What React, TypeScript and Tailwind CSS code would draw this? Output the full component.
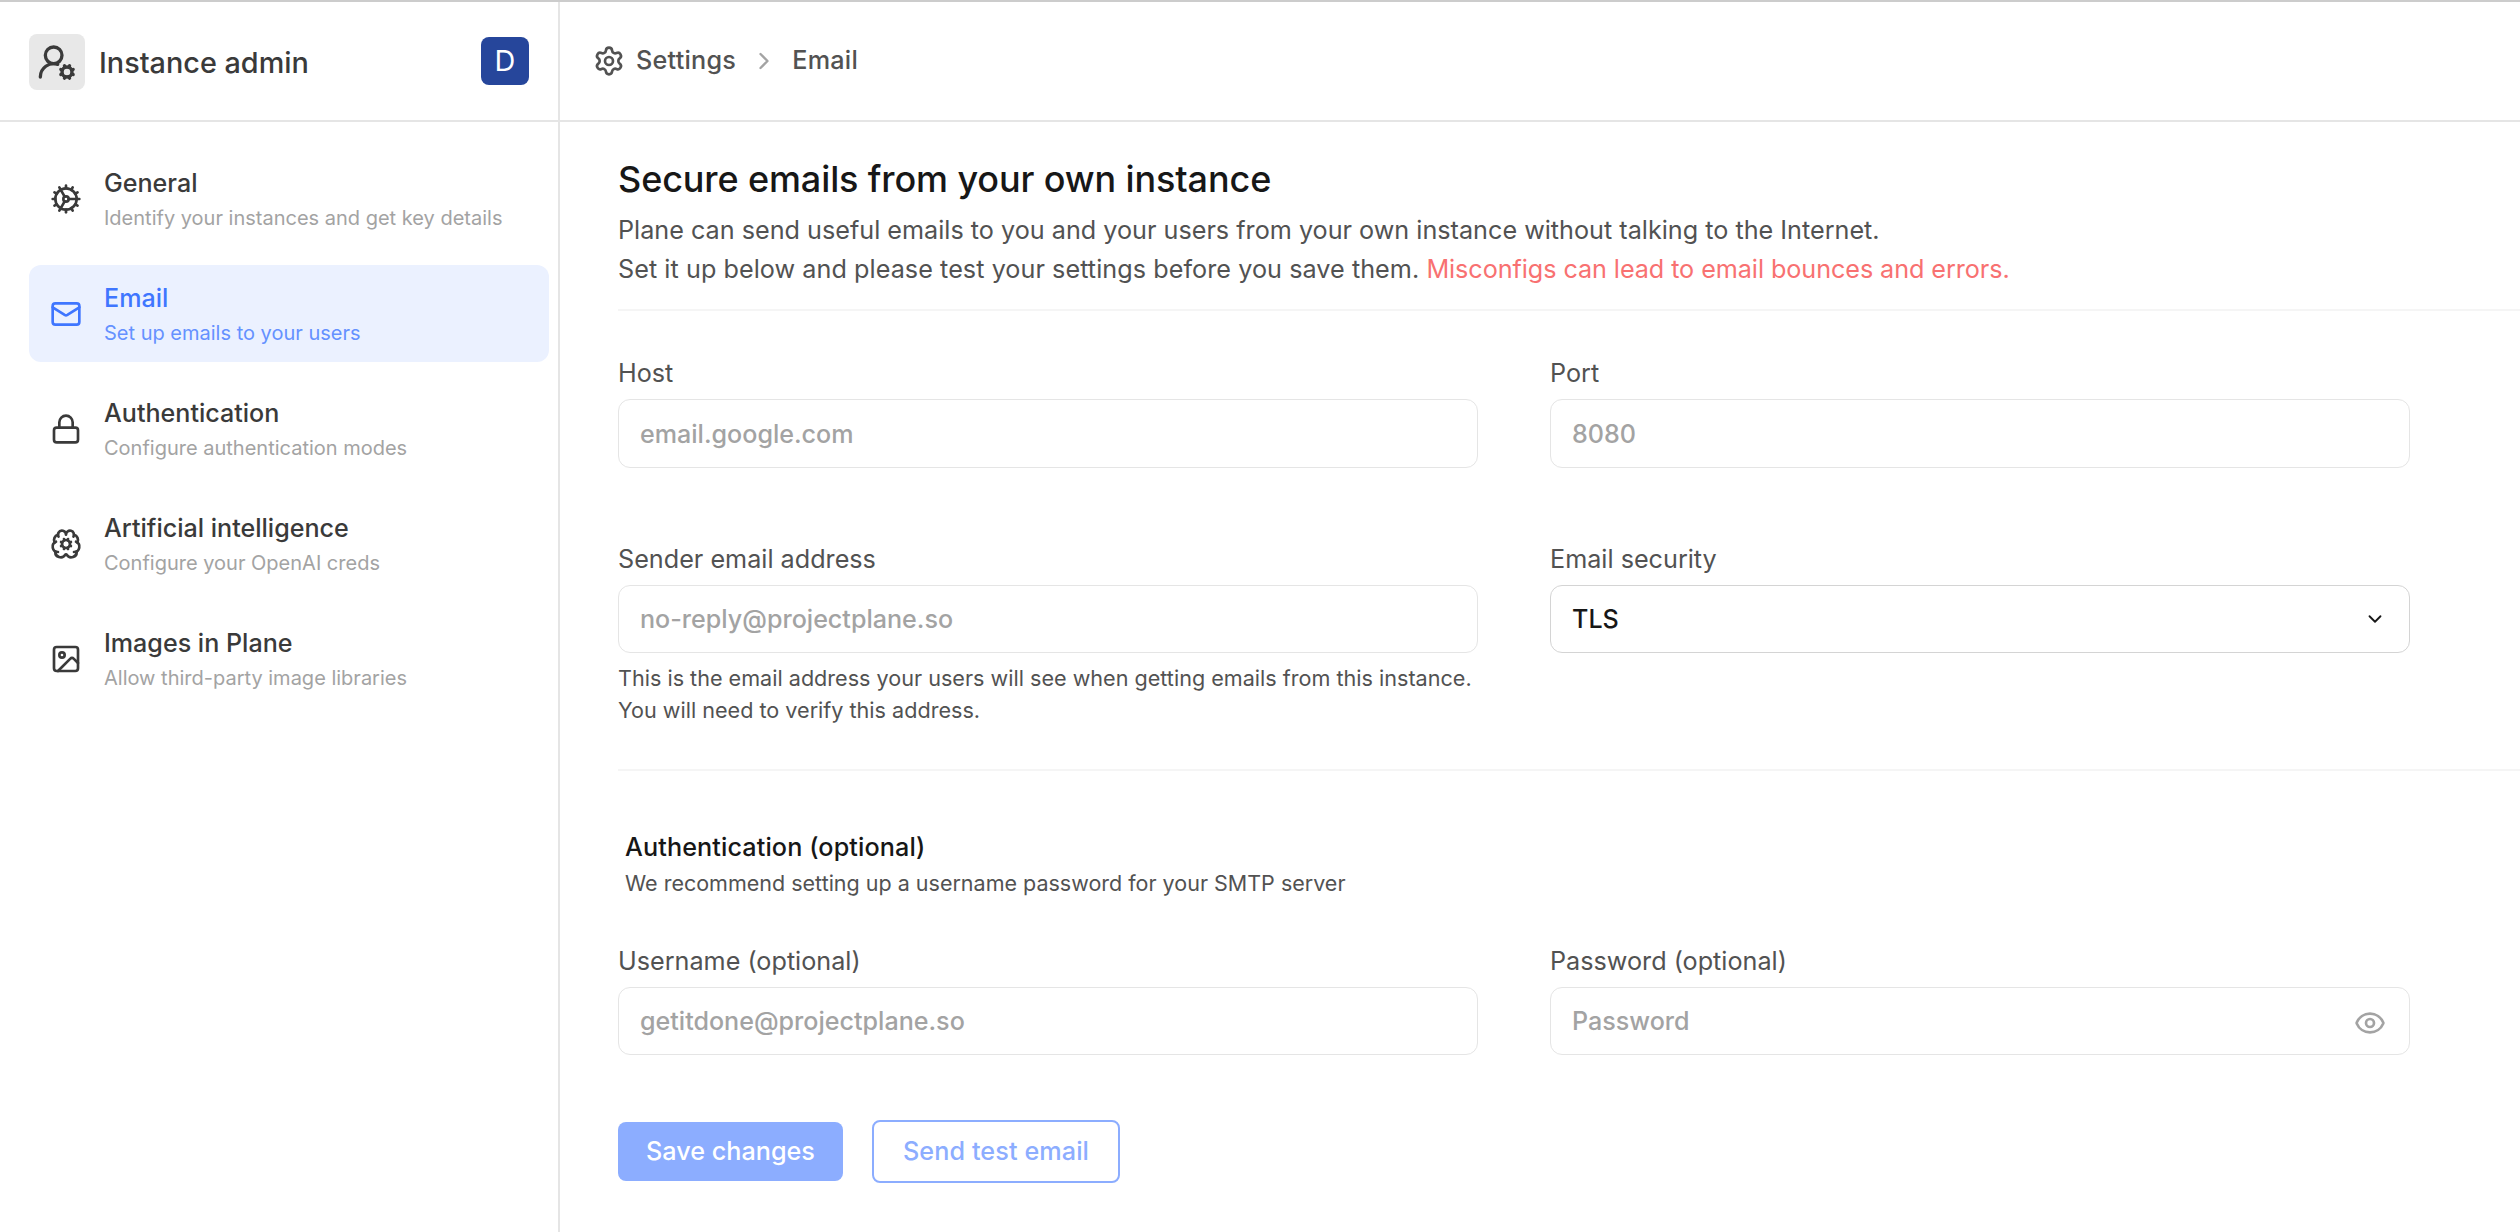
import { BrainCog, ChevronDown, ChevronRight, Cog, Eye, Image, Lock, Mail, Settings, UserRoundCog } from "lucide-react";
import type { LucideIcon } from "lucide-react";

type NavItem = { icon: LucideIcon; title: string; text: string; active?: boolean };

const navItems: NavItem[] = [
  { icon: Cog, title: "General", text: "Identify your instances and get key details" },
  { icon: Mail, title: "Email", text: "Set up emails to your users", active: true },
  { icon: Lock, title: "Authentication", text: "Configure authentication modes" },
  { icon: BrainCog, title: "Artificial intelligence", text: "Configure your OpenAI creds" },
  { icon: Image, title: "Images in Plane", text: "Allow third-party image libraries" },
];

function Sidebar() {
  return (
    <aside className="flex w-[560px] shrink-0 flex-col border-r-2 border-[#e5e5e5]">
      <div className="flex h-[120px] shrink-0 items-center border-b-2 border-[#e5e5e5] px-[29px]">
        <div className="mt-0.5 flex size-14 items-center justify-center rounded-lg bg-[#e8e8e8] text-[#3a3a3a]">
          <UserRoundCog size={40} strokeWidth={2} />
        </div>
        <span className="ml-3.5 mt-[3px] text-[28.8px] font-medium leading-10 text-[#3a3a3a]">Instance admin</span>
        <div className="ml-auto flex size-12 items-center justify-center rounded-lg bg-[#26469b] text-[28.8px] text-white">D</div>
      </div>
      <nav className="flex flex-col gap-[18px] pl-[29px] pr-[9px] pt-[28px]">
        {navItems.map(({ icon: Icon, title, text, active }) => (
          <a
            key={title}
            className={
              active
                ? "flex h-[97px] items-center gap-[22px] rounded-xl bg-[#ebf1ff] px-[21px] text-[#3f76ff]"
                : "flex h-[97px] items-center gap-[22px] rounded-xl px-[21px] text-[#3a3a3a]"
            }
          >
            <Icon size={32} strokeWidth={2} />
            <div className="pt-[3px]">
              <div className="text-[25.1px] font-medium leading-8">{title}</div>
              <div className={active ? "mt-[3px] text-[20px] leading-8 text-[#6591ff]" : "mt-[3px] text-[20px] leading-8 text-[#a3a3a3]"}>{text}</div>
            </div>
          </a>
        ))}
      </nav>
    </aside>
  );
}

function Label({ children }: { children: string }) {
  return <label className="text-[25.2px] leading-8 text-[#525252]">{children}</label>;
}

type FieldProps = { label: string; placeholder: string; password?: boolean; tall?: boolean };

function Field({ label, placeholder, password, tall }: FieldProps) {
  return (
    <div className="flex w-[860px] flex-col gap-[10px]">
      <Label>{label}</Label>
      <div
        className={
          tall
            ? "flex h-[69px] items-center justify-between rounded-xl border border-[#e5e5e5] pl-[21px] pr-[23px] text-[25.1px] font-medium leading-8 text-[#a3a3a3]"
            : "flex h-[68px] items-center justify-between rounded-xl border border-[#e5e5e5] pl-[21px] pr-[23px] text-[25.1px] font-medium leading-8 text-[#a3a3a3]"
        }
      >
        <span>{placeholder}</span>
        {password && <Eye size={32} className="mt-[3px]" />}
      </div>
    </div>
  );
}

export default function App() {
  return (
    <div className="flex h-[1232px] w-[2520px] overflow-hidden border-t-2 border-[#cccccc] bg-white font-['Inter',sans-serif]">
      <Sidebar />
      <main className="flex min-w-0 flex-1 flex-col">
        <header className="flex h-[120px] shrink-0 items-center border-b-2 border-[#e5e5e5] pl-[33px] text-[25.2px] font-medium tracking-[0.25px] text-[#525252]">
          <Settings size={32} />
          <span className="ml-[11px]">Settings</span>
          <ChevronRight size={28} className="mx-[14px] text-[#a3a3a3]" />
          <span>Email</span>
        </header>
        <div className="flex flex-col pl-[58px] pt-8">
          <section className="border-b-2 border-[#f5f5f5] pb-[21px]">
            <h1 className="text-[36px] font-medium leading-[50px] tracking-[-0.12px] text-[#171717]">Secure emails from your own instance</h1>
            <p className="mt-[7px] text-[25.2px] leading-[38.5px] text-[#525252]">
              Plane can send useful emails to you and your users from your own instance without talking to the Internet.
              <br />
              <span className="tracking-[0.05px]">Set it up below and please test your settings before you save them. </span>
              <span className="tracking-[-0.07px] text-[#f87171]">Misconfigs can lead to email bounces and errors.</span>
            </p>
          </section>
          <section className="flex flex-col gap-[75px] border-b-2 border-[#f5f5f5] pb-[43px] pt-[46px]">
            <div className="flex gap-[72px]">
              <Field label="Host" placeholder="email.google.com" tall />
              <Field label="Port" placeholder="8080" tall />
            </div>
            <div className="flex gap-[72px]">
              <div>
                <Field label="Sender email address" placeholder="no-reply@projectplane.so" />
                <p className="mt-[9px] text-[21.6px] leading-8 text-[#525252]">
                  This is the email address your users will see when getting emails from this instance.
                  <br />
                  You will need to verify this address.
                </p>
              </div>
              <div className="flex w-[860px] flex-col gap-[10px]">
                <Label>Email security</Label>
                <div className="flex h-[68px] items-center justify-between rounded-xl border border-[#d4d4d4] pl-[21px] pr-[23px] text-[25.1px] font-medium leading-8 text-[#171717]">
                  <span>TLS</span>
                  <ChevronDown size={22} />
                </div>
              </div>
            </div>
          </section>
          <section className="pt-[58px]">
            <div className="pl-[7px]">
              <h2 className="text-[25.2px] font-medium leading-9 tracking-[0.1px] text-[#171717]">Authentication (optional)</h2>
              <p className="text-[21.5px] leading-9 text-[#525252]">We recommend setting up a username password for your SMTP server</p>
            </div>
            <div className="mt-[44px] flex gap-[72px]">
              <Field label="Username (optional)" placeholder="getitdone@projectplane.so" />
              <Field label="Password (optional)" placeholder="Password" password />
            </div>
          </section>
          <div className="mt-[65px] flex items-center gap-[29px] text-[25.2px] font-medium">
            <button className="h-[59px] w-[225px] rounded-lg bg-[#8cadff] text-white">Save changes</button>
            <button className="h-[63px] w-[248px] rounded-lg border-2 border-[#8cadff] tracking-[0.1px] text-[#8cadff]">Send test email</button>
          </div>
        </div>
      </main>
    </div>
  );
}
